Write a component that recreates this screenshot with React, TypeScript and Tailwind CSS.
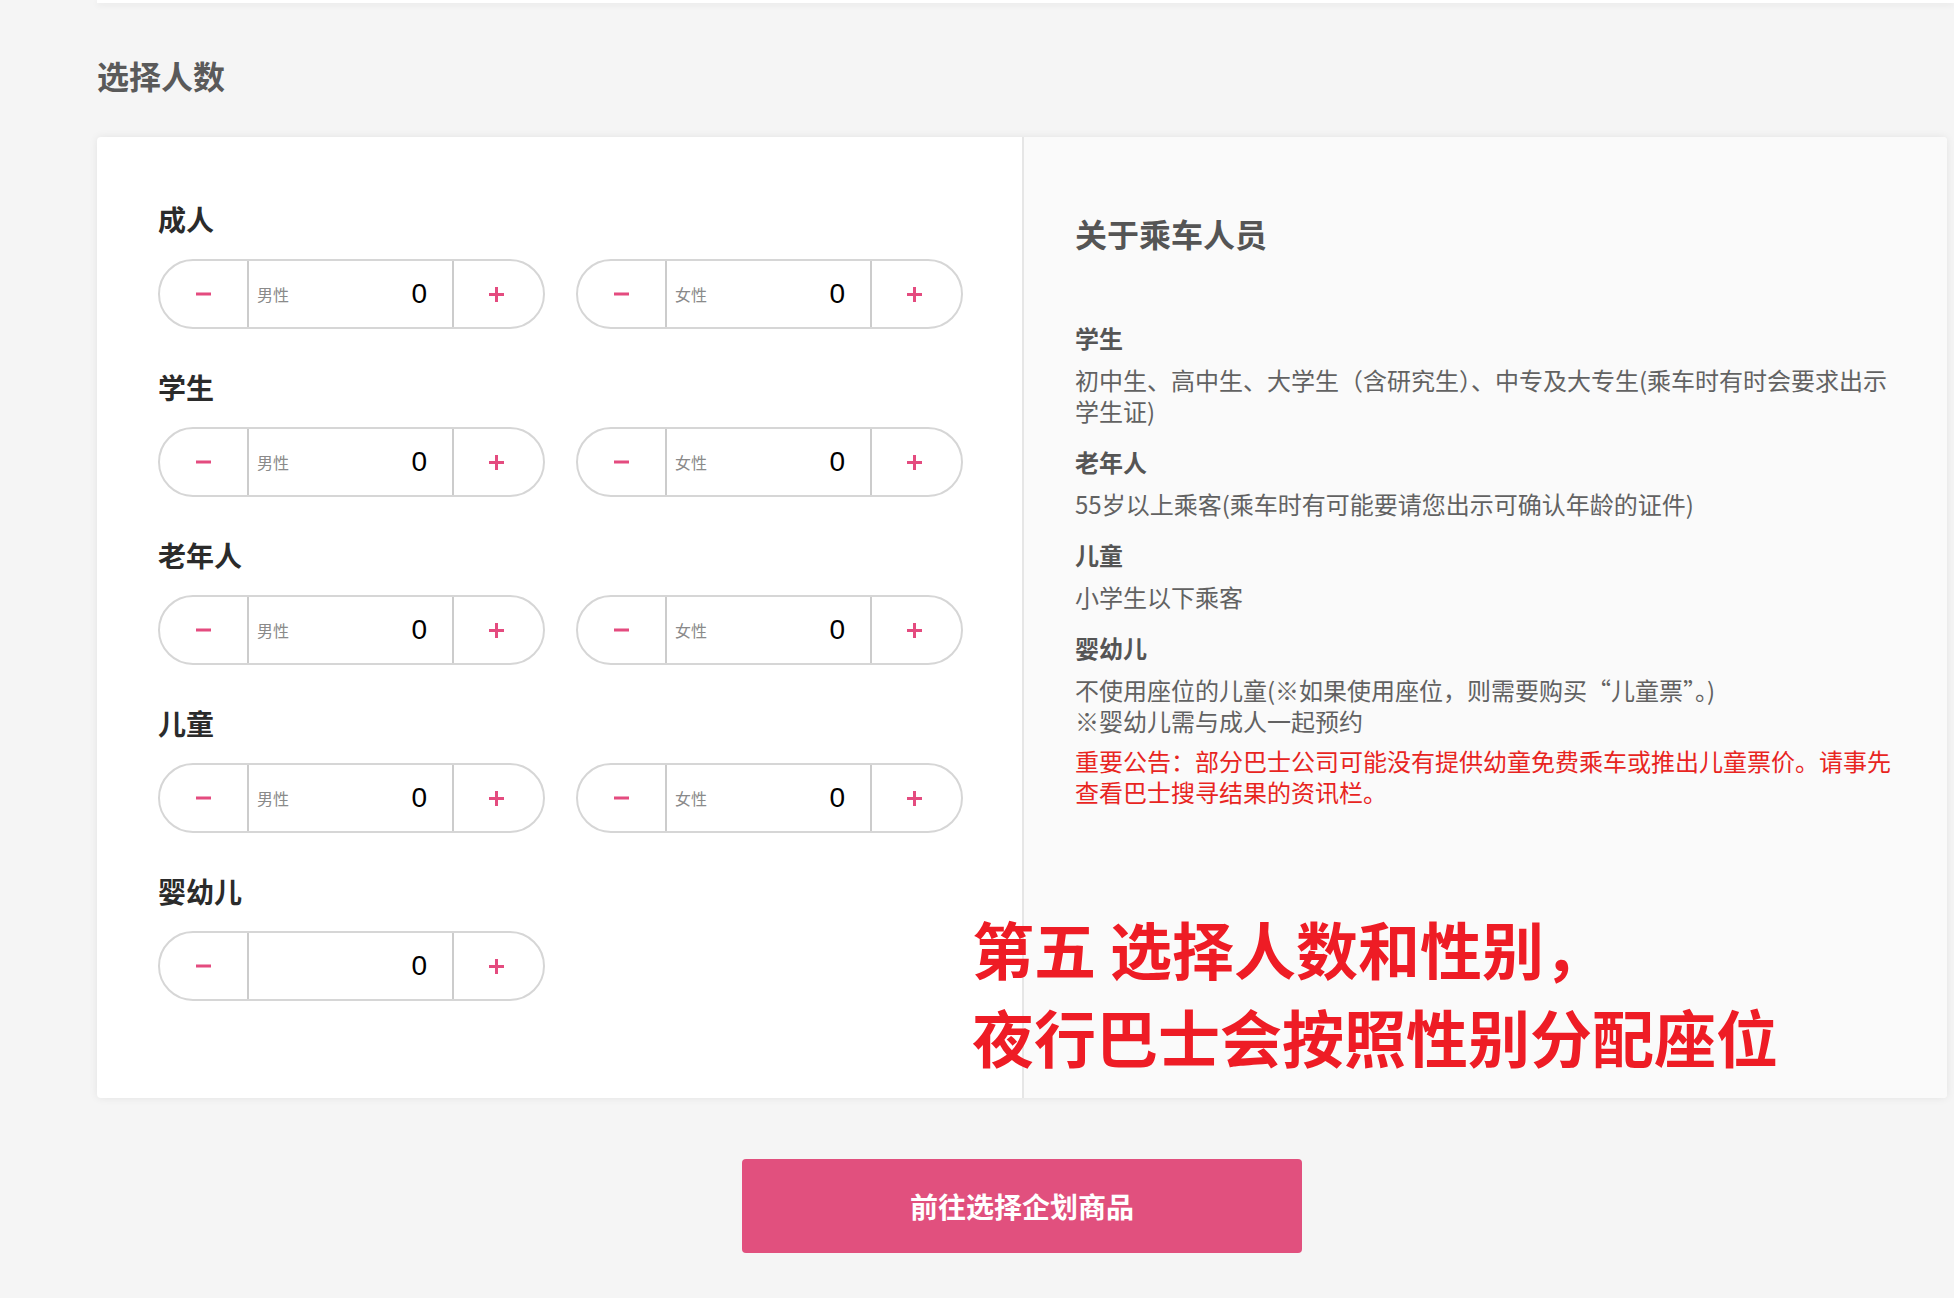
import React from "react";

function Minus() {
  return (
    <svg width="15" height="4" viewBox="0 0 15 4" aria-hidden="true">
      <rect x="0" y="0.5" width="15" height="3" fill="#e44b7f" />
    </svg>
  );
}

function Plus() {
  return (
    <svg width="15" height="15" viewBox="0 0 15 15" aria-hidden="true">
      <rect x="0" y="6" width="15" height="3" fill="#e44b7f" />
      <rect x="6" y="0" width="3" height="15" fill="#e44b7f" />
    </svg>
  );
}

function Stepper({ label }: { label?: string }) {
  return (
    <div className="flex h-[70px] w-[387px] overflow-hidden rounded-full border-2 border-[#d6d6d6] bg-white">
      <div className="flex w-[87px] items-center justify-center">
        <Minus />
      </div>
      <div className="flex w-[207px] items-center justify-between border-x-2 border-[#cccccc] pl-[8px] pr-[25px]">
        <span className="text-[16px] leading-none text-[#8a8a8a]">{label ?? ""}</span>
        <span className="font-['Liberation_Sans',sans-serif] text-[28px] leading-none text-black">0</span>
      </div>
      <div className="flex w-[85px] items-center justify-center">
        <Plus />
      </div>
    </div>
  );
}

function Section({ title, single, first }: { title: string; single?: boolean; first?: boolean }) {
  return (
    <div className={first ? "" : "mt-[43px]"}>
      <div className="text-[28px] font-bold leading-[30px] text-[#2b2b2b]">{title}</div>
      <div className="mt-[25px] flex gap-[31px]">
        {single ? (
          <Stepper />
        ) : (
          <>
            <Stepper label="男性" />
            <Stepper label="女性" />
          </>
        )}
      </div>
    </div>
  );
}

function InfoBlock({ title, lines }: { title: string; lines: string[] }) {
  return (
    <>
      <div className="mt-[20px] text-[24px] font-bold leading-[32px] text-[#555555]">{title}</div>
      <div className="mt-[10px] text-[24px] leading-[31px] text-[#626262]">
        {lines.map((l, i) => (
          <div key={i} className="whitespace-nowrap">
            {l}
          </div>
        ))}
      </div>
    </>
  );
}

export default function App() {
  return (
    <div className="relative min-h-[1298px] w-[1954px] overflow-hidden bg-[#f5f5f5] font-['Noto_Sans_CJK_SC',sans-serif]">
      <div className="ml-[97px] h-[3px] bg-white shadow-[0_2px_6px_rgba(0,0,0,0.08)]" />

      <h2 className="ml-[97px] mt-[52px] text-[32px] font-bold leading-[40px] text-[#5a5a5a]">选择人数</h2>

      <div className="ml-[97px] mt-[42px] flex h-[961px] w-[1850px] overflow-hidden rounded-[4px] bg-white shadow-[0_0_8px_rgba(0,0,0,0.08)]">
        <div className="w-[925px] pl-[61px] pt-[67px]">
          <Section title="成人" first />
          <Section title="学生" />
          <Section title="老年人" />
          <Section title="儿童" />
          <Section title="婴幼儿" single />
        </div>

        <div className="flex-1 border-l-2 border-[#e6e6e6] bg-[#fafafa] pl-[51px] pt-[74px]">
          <div className="text-[32px] font-bold leading-[44px] text-[#555555]">关于乘车人员</div>
          <div className="mt-[67px]">
            <InfoBlock
              title="学生"
              lines={["初中生、高中生、大学生（含研究生）、中专及大专生(乘车时有时会要求出示", "学生证)"]}
            />
            <InfoBlock title="老年人" lines={["55岁以上乘客(乘车时有可能要请您出示可确认年龄的证件)"]} />
            <InfoBlock title="儿童" lines={["小学生以下乘客"]} />
            <InfoBlock
              title="婴幼儿"
              lines={["不使用座位的儿童(※如果使用座位，则需要购买“儿童票”。)", "※婴幼儿需与成人一起预约"]}
            />
            <div className="mt-[9px] text-[24px] leading-[31px] text-[#e8251f]">
              <div className="whitespace-nowrap">重要公告：部分巴士公司可能没有提供幼童免费乘车或推出儿童票价。请事先</div>
              <div className="whitespace-nowrap">查看巴士搜寻结果的资讯栏。</div>
            </div>
          </div>
        </div>
      </div>

      <div className="ml-[97px] mt-[61px] flex w-[1850px] justify-center">
        <button className="flex h-[94px] w-[560px] items-center justify-center rounded-[4px] bg-[#e1507e] text-[28px] font-bold text-white">
          前往选择企划商品
        </button>
      </div>

      <div className="absolute left-[972px] top-[904px] whitespace-nowrap text-[62px] font-bold leading-[88px] text-[#ee1c25]">
        <div>第五 选择人数和性别，</div>
        <div>夜行巴士会按照性别分配座位</div>
      </div>
    </div>
  );
}
